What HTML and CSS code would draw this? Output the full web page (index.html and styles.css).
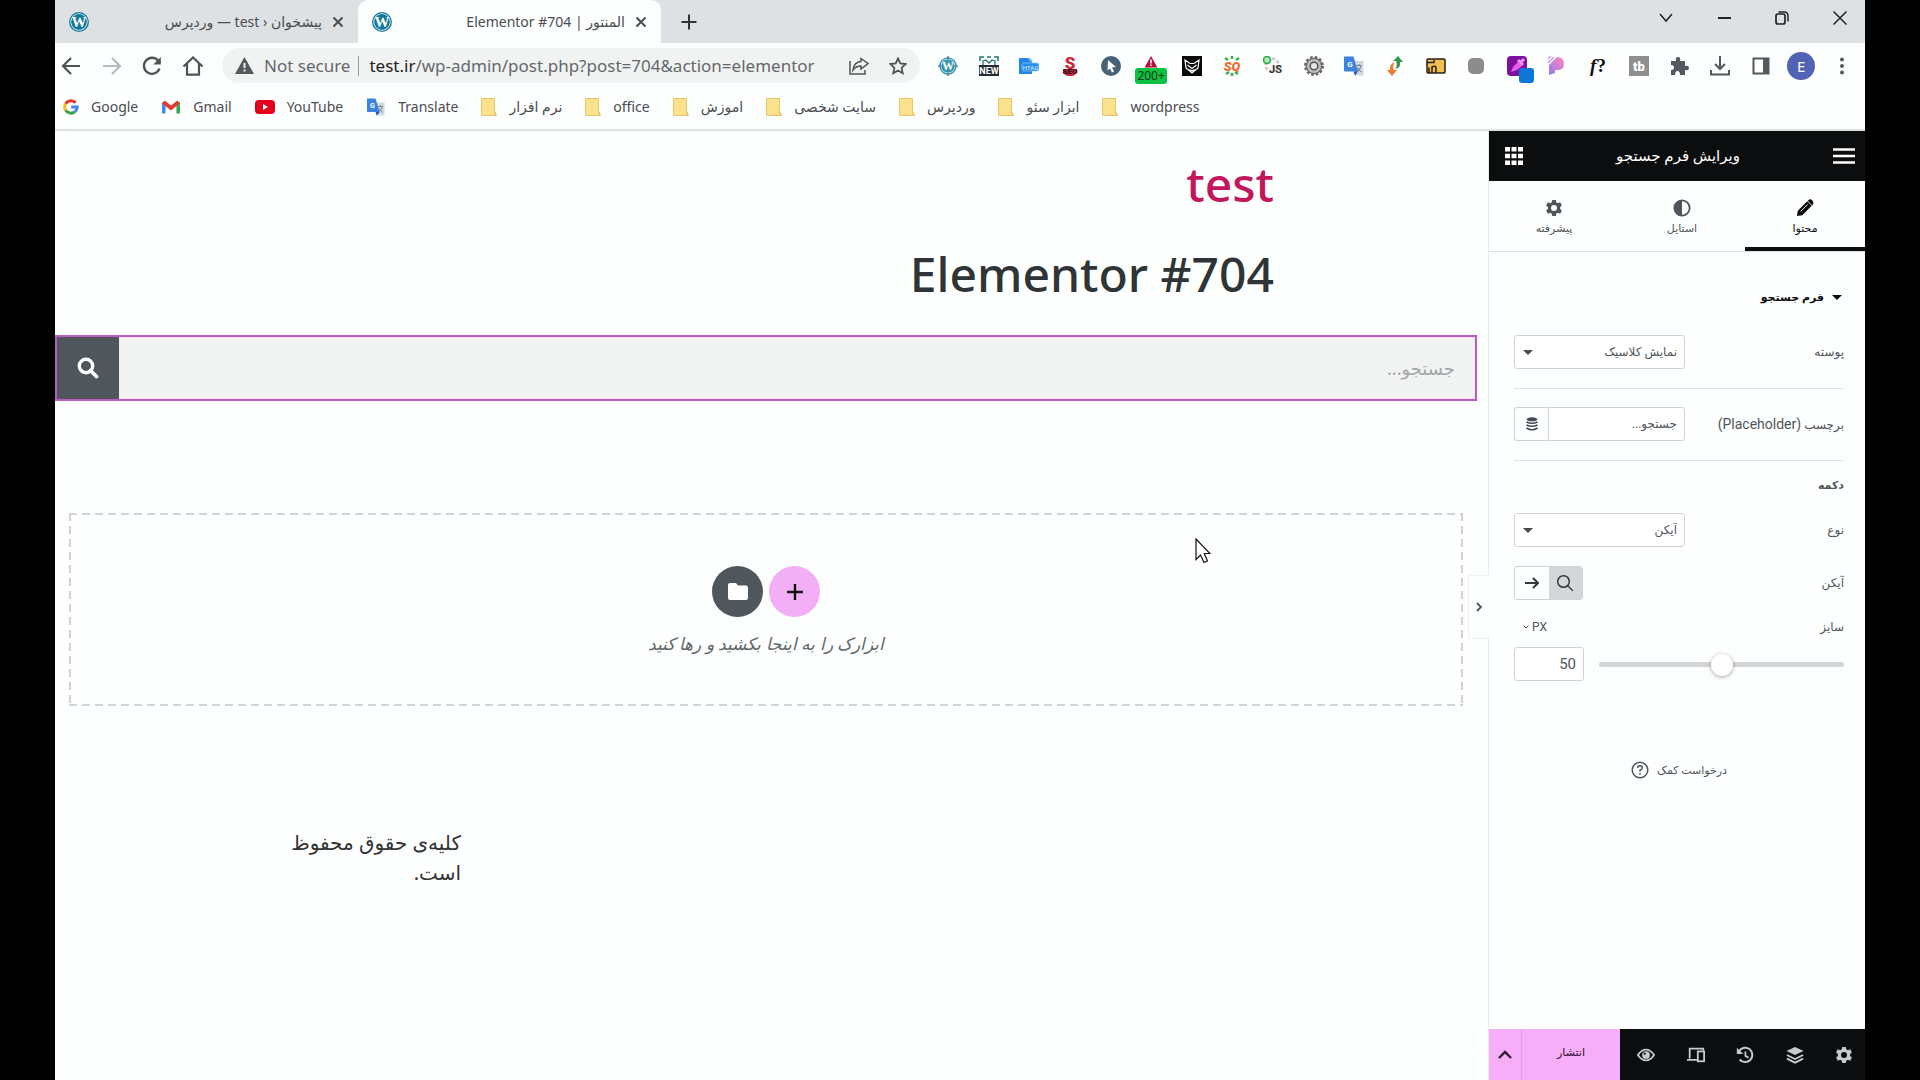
FILE: index.html
```html
<!DOCTYPE html>
<html lang="fa">
<head>
    <meta charset="UTF-8">
    <meta name="viewport" content="width=device-width, initial-scale=1.0">
    <title>المنتور | Elementor #704</title>
    <link rel="stylesheet" href="styles.css">
</head>
<body>
    <svg class="defs" aria-hidden="true">
        <symbol id="folder" viewBox="0 0 16 18">
            <path d="M.5.5h13v13l2 4H.5z" fill="#fbe28d" stroke="#e6c66a"/>
            <path d="M13.5 11v6.500h2z" fill="#e9c65d"/>
        </symbol>
        <symbol id="close" viewBox="0 0 12 12">
            <path d="M1.500 1.500l9 9m0-9l-9 9" stroke="currentColor" stroke-width="2" fill="none"/>
        </symbol>
        <symbol id="gear" viewBox="0 0 20 20">
            <path fill="currentColor" fill-rule="evenodd" d="M8 1h4l.5 2.600 1.800 1L16.800 3.700l2 3.500-2 1.700v2.200l2 1.700-2 3.500-2.500-.9-1.800 1L12 19H8l-.5-2.600-1.800-1-2.500.9-2-3.500 2-1.700V8.900l-2-1.700 2-3.500 2.500.9 1.800-1zM10 6.700a3.300 3.300 0 1 0 0 6.600 3.300 3.300 0 0 0 0-6.600z"/>
        </symbol>
    </svg>

    <header class="browser">
        <div class="tabs-bar">
            <div class="tab">
                <svg class="fav" viewBox="0 0 20 20"><circle cx="10" cy="10" r="9.300" fill="#fff" stroke="#12799a" stroke-width="1.300"/><circle cx="10" cy="10" r="7.900" fill="#12799a"/><text x="10" y="15" text-anchor="middle" font-family="Liberation Serif, serif" font-weight="bold" font-size="15" fill="#fff">W</text></svg>
                <span class="tab-title" dir="rtl">پیشخوان ‹ test — وردپرس</span>
                <button class="tab-close" aria-label="Close tab"><svg><use href="#close"/></svg></button>
            </div>
            <div class="tab active">
                <svg class="fav" viewBox="0 0 20 20"><circle cx="10" cy="10" r="9.300" fill="#fff" stroke="#12799a" stroke-width="1.300"/><circle cx="10" cy="10" r="7.900" fill="#12799a"/><text x="10" y="15" text-anchor="middle" font-family="Liberation Serif, serif" font-weight="bold" font-size="15" fill="#fff">W</text></svg>
                <span class="tab-title" dir="rtl">المنتور | Elementor #704</span>
                <button class="tab-close" aria-label="Close tab"><svg><use href="#close"/></svg></button>
            </div>
            <button class="new-tab" aria-label="New tab"><svg width="16" height="16" viewBox="0 0 16 16"><path d="M8 .5v15M.5 8h15" stroke="currentColor" stroke-width="2"/></svg></button>
            <div class="window-buttons">
                <button aria-label="Search tabs"><svg width="14" height="10" viewBox="0 0 14 10"><path d="M1 1l6 7 6-7" fill="none" stroke="currentColor" stroke-width="1.500"/></svg></button>
                <button aria-label="Minimize"><svg width="13" height="10" viewBox="0 0 13 10"><path d="M0 5h13" stroke="currentColor" stroke-width="2"/></svg></button>
                <button aria-label="Restore"><svg width="14" height="14" viewBox="0 0 14 14"><rect x="1" y="3" width="9" height="10" rx="2" fill="none" stroke="currentColor" stroke-width="1.700"/><path d="M3.500 1H9q4 0 4 4v5.500" fill="none" stroke="currentColor" stroke-width="1.500"/></svg></button>
                <button aria-label="Close"><svg width="14" height="14" viewBox="0 0 14 14"><path d="M.5.5l13 13m0-13l-13 13" stroke="currentColor" stroke-width="1.500"/></svg></button>
            </div>
        </div>

        <div class="toolbar">
            <div class="nav">
                <button aria-label="Back"><svg width="20" height="20" viewBox="0 0 20 20"><path d="M19 10H2m8-8l-8 8 8 8" fill="none" stroke="currentColor" stroke-width="2.200"/></svg></button>
                <button class="disabled" aria-label="Forward"><svg width="20" height="20" viewBox="0 0 20 20"><path d="M1 10h17m-8-8l8 8-8 8" fill="none" stroke="currentColor" stroke-width="2.200"/></svg></button>
                <button aria-label="Reload"><svg width="20" height="20" viewBox="0 0 20 20"><path d="M17.500 12.500A8 8 0 1 1 16 4.500L18 7" fill="none" stroke="currentColor" stroke-width="2.300"/><path d="M18.800 1v7.500h-7.500z" fill="currentColor"/></svg></button>
                <button aria-label="Home"><svg width="22" height="20" viewBox="0 0 22 20"><path d="M1.500 10.500L11 1.500l9.500 9M5 8v10.700h12V8" fill="none" stroke="currentColor" stroke-width="2.200"/></svg></button>
            </div>
            <div class="omnibox">
                <svg width="19" height="17" viewBox="0 0 19 17"><path d="M9.500 0L19 17H0z" fill="#55585c"/><path d="M9.500 6v5M9.500 12.500v2" stroke="#f1f3f4" stroke-width="2"/></svg>
                <span class="not-secure">Not secure</span>
                <span class="url"><b>test.ir</b>/wp-admin/post.php?post=704&amp;action=elementor</span>
                <button aria-label="Share"><svg width="20" height="18" viewBox="0 0 20 18"><path d="M1 4v13h15v-4" fill="none" stroke="currentColor" stroke-width="1.500"/><path d="M12 1.500l7 5-7 5.500V9q-5 0-8 4 1-8 8-8.500z" fill="none" stroke="currentColor" stroke-width="1.500"/></svg></button>
                <button aria-label="Bookmark"><svg width="18" height="18" viewBox="0 0 18 18"><path d="M9 1.500l2.300 5 5.300.6-4 3.700 1.100 5.400L9 13.500l-4.700 2.700 1.100-5.400-4-3.700 5.300-.6z" fill="none" stroke="currentColor" stroke-width="1.800"/></svg></button>
            </div>
            <div class="extensions">
                <svg viewBox="0 0 20 20"><circle cx="10" cy="10" r="8" fill="#fff" stroke="#4298b0" stroke-width="1.500"/><circle cx="10" cy="10" r="6.800" fill="#3794b0"/><text x="10" y="14.400" text-anchor="middle" font-family="Liberation Serif, serif" font-weight="bold" font-size="12" fill="#fff">W</text><path d="M10 0v3m0 14v3M0 10h3m14 0h3" stroke="#466a75" stroke-width="1.200"/></svg>
                <svg viewBox="0 0 20 20"><path d="M1 5V1h4M15 1h4v4M8 1h4" stroke="#28776f" stroke-width="1.600" fill="none"/><path d="M4 9V5l3-1 3 3 3-3 3 1v4" fill="none" stroke="#28776f" stroke-width="1.300"/><rect y="9" width="20" height="11" fill="#252b30"/><text x="10" y="18" text-anchor="middle" font-family="Roboto, sans-serif" font-weight="bold" font-size="9" fill="#fff">NEW</text></svg>
                <svg viewBox="0 0 20 20"><path d="M0 2h9l4 4v12H0z" fill="#2087e8"/><path d="M10 1l4 4h-4z" fill="#79bcfa"/><rect x="3" y="7" width="17" height="8" rx="2" fill="#278fed" stroke="#8cc6fb" stroke-width=".7"/><text x="11.500" y="13.500" text-anchor="middle" font-family="Roboto, sans-serif" font-size="6" fill="#e3f1ff">HTAG</text></svg>
                <svg viewBox="0 0 20 20"><text x="10" y="13" text-anchor="middle" font-family="Roboto, sans-serif" font-weight="900" font-size="17" fill="#cf2740">S</text><path d="M3 13h14v4l-4 3H7l-4-3z" fill="#cf2740"/><text x="10" y="18" text-anchor="middle" font-family="Roboto, sans-serif" font-weight="900" font-size="8" fill="#301018">SEO</text></svg>
                <svg viewBox="0 0 20 20"><circle cx="10" cy="10" r="10" fill="#476177"/><path d="M7 4l8 7-4 .5 2 4-2 1-2-4-2.500 2z" fill="#fff"/></svg>
                <span class="ext-badge"><svg viewBox="0 0 20 20"><path d="M10 0l6.500 11.500h-13z" fill="#b50f3c"/><path d="M10 3.500v4M10 8.500v1.500" stroke="#fff" stroke-width="1.500"/></svg><span class="badge">200+</span></span>
                <svg viewBox="0 0 20 20"><rect width="20" height="20" fill="#0a0a0a"/><path d="M3 4l5 3.500h4L17 4l-1 8-6 5-6-5zM5.500 9l4.500 3.500L14.500 9M7.500 13.500l2.500 1.500 2.500-1.500" fill="none" stroke="#fff" stroke-width="1.200"/></svg>
                <svg viewBox="0 0 20 20"><path d="M3 2l3 2M10 0v3M17 2l-3 2M4 18l3-2M10 20v-3M16 18l-3-2" stroke="#37b24a" stroke-width="2.500"/><text x="10" y="15" text-anchor="middle" font-family="Roboto, sans-serif" font-weight="900" font-style="italic" font-size="13" fill="#f06a29">SQ</text></svg>
                <svg viewBox="0 0 20 20"><circle cx="9" cy="9" r="6.500" fill="#f7f7f7" stroke="#c9c9c9" stroke-width="2.500" stroke-dasharray="3 2"/><circle cx="4" cy="4" r="3.500" fill="#a9edb8" stroke="#28a34a" stroke-width="1.500"/><text x="19" y="17" text-anchor="end" font-family="Roboto, sans-serif" font-weight="bold" font-size="11" fill="#333">JS</text></svg>
                <svg viewBox="0 0 20 20"><circle cx="10" cy="10" r="8.500" fill="#aaa" stroke="#666" stroke-width="3" stroke-dasharray="2.500 2"/><circle cx="10" cy="10" r="7.500" fill="#bdbdbd" stroke="#666"/><circle cx="10" cy="10" r="3.800" fill="#e5e5e5" stroke="#555" stroke-width="1.500"/></svg>
                <svg viewBox="0 0 20 20"><path d="M9 5h10.500v14.500H11z" fill="#d4d9df"/><path d="M12 9.500h6M15 8v1.500M17 10q-1 4-5 6M13 11.500q2 3 4.500 4.500" stroke="#7a8794" stroke-width="1.100" fill="none"/><path d="M0 .5h9.500L14 15.500H1q-1 0-1-1z" fill="#3c82de"/><path d="M9.500 15.500H14L11 19.800z" fill="#1f57b0"/><text x="6" y="11" text-anchor="middle" font-family="Roboto, sans-serif" font-weight="bold" font-size="8" fill="#fff">G</text></svg>
                <svg viewBox="0 0 20 20"><path d="M8 5l5-5 5 6h-3q1 6-5 7 3-3 1-8z" fill="#36944b"/><path d="M12 14l-5 6-5-6h3q-1-6 5-8-3 3-1 8z" fill="#ec7b38"/></svg>
                <svg viewBox="0 0 20 20"><rect x="1" y="3" width="18" height="14" rx="1" fill="#f3bf52" stroke="#282018" stroke-width="1.500"/><path d="M1 6.500h7V4M3 17v-5.500M6 17v-6q4-2 4 1v5" fill="none" stroke="#282018" stroke-width="1.500"/></svg>
                <svg viewBox="0 0 20 20"><rect x="2" y="2" width="16" height="16" rx="5" fill="#8c8c8c"/></svg>
                <span class="ext-badge"><svg viewBox="0 0 20 20"><rect width="20" height="20" rx="4" fill="#7b119e"/><path d="M4 16l2-5 5-5 4 4-5 4z" fill="#e55de7"/><path d="M11 4l5 5M13 7l4-4" stroke="#f292f0" stroke-width="3"/></svg><span class="badge-blue"></span></span>
                <svg viewBox="0 0 20 20"><defs><linearGradient id="pg" x1="1" y1="0" x2="0" y2="1"><stop offset="0" stop-color="#ff8ab9"/><stop offset="1" stop-color="#9676ef"/></linearGradient></defs><path d="M2 9l8-8q7 0 7 7t-9 6v3l-6 2z" fill="url(#pg)"/><path d="M1 3l3-3M1 7l6-6" stroke="#cc9cef" stroke-width="1.500"/></svg>
                <svg viewBox="0 0 20 20"><text x="10" y="16" text-anchor="middle" font-family="Liberation Serif, serif" font-weight="bold" font-size="19" fill="#111"><tspan font-style="italic">f</tspan>?</text></svg>
                <svg viewBox="0 0 20 20"><rect width="20" height="20" fill="#8f8f8f"/><text x="10" y="15" text-anchor="middle" font-family="Roboto, sans-serif" font-weight="900" font-size="13" fill="#fff">tb</text></svg>
                <svg viewBox="0 0 20 20"><path d="M2 5h5q-1-4 2-4t2 4h5v5q4-1 4 2t-4 2v5h-5q0-4-2.500-4T6 19H2v-5q3 0 3-2.500T2 9z" fill="#55585c"/></svg>
                <svg viewBox="0 0 20 20"><path d="M10 0v12M5 8l5 5 5-5M1 14v4.500h18V14" fill="none" stroke="#55585c" stroke-width="2"/></svg>
                <svg viewBox="0 0 20 20"><rect x="2.500" y="2.500" width="15" height="15" fill="#fff" stroke="#55585c" stroke-width="2"/><path d="M12 2h6v16h-6z" fill="#55585c"/></svg>
                <span class="avatar">E</span>
                <svg viewBox="0 0 20 20"><g fill="#55585c"><circle cx="10" cy="3.500" r="2"/><circle cx="10" cy="10" r="2"/><circle cx="10" cy="16.500" r="2"/></g></svg>
            </div>
        </div>

        <nav class="bookmarks">
            <a href="#"><svg viewBox="0 0 18 18"><g fill="none" stroke-width="3.400"><path d="M14.300 4.300A7 7 0 0 0 3 5.400" stroke="#e33c2e"/><path d="M3 5.400a7 7 0 0 0 0 7.200" stroke="#f5ba1b"/><path d="M3 12.600a7 7 0 0 0 10.500 1.700" stroke="#34a351"/><path d="M13.500 14.300Q16 12 16 9H9.200" stroke="#4385ee"/></g></svg>Google</a>
            <a href="#"><svg class="wide" viewBox="0 0 20 18"><path d="M2.800 15.500V4" stroke="#4285f4" stroke-width="3.500"/><path d="M17.200 15.500V4" stroke="#34a853" stroke-width="3.500"/><path d="M2.500 4L10 10l7.500-6" fill="none" stroke="#e33b30" stroke-width="3.800"/></svg>Gmail</a>
            <a href="#"><svg class="wide" viewBox="0 0 20 18"><rect y="2" width="20" height="14" rx="4" fill="#e5001e"/><path d="M8 6l5 3-5 3z" fill="#fff"/></svg>YouTube</a>
            <a href="#"><svg class="wide" viewBox="0 0 20 20"><path d="M9 5h10.500v14.500H11z" fill="#d4d9df"/><path d="M12 9.500h6M15 8v1.500M17 10q-1 4-5 6M13 11.500q2 3 4.500 4.500" stroke="#7a8794" stroke-width="1.100" fill="none"/><path d="M0 .5h9.500L14 15.500H1q-1 0-1-1z" fill="#3c82de"/><path d="M9.500 15.500H14L11 19.800z" fill="#1f57b0"/><text x="6" y="11" text-anchor="middle" font-family="Roboto, sans-serif" font-weight="bold" font-size="8" fill="#fff">G</text></svg>Translate</a>
            <a href="#"><svg><use href="#folder"/></svg>نرم افزار</a>
            <a href="#"><svg><use href="#folder"/></svg>office</a>
            <a href="#"><svg><use href="#folder"/></svg>اموزش</a>
            <a href="#"><svg><use href="#folder"/></svg>سایت شخصی</a>
            <a href="#"><svg><use href="#folder"/></svg>وردپرس</a>
            <a href="#"><svg><use href="#folder"/></svg>ابزار سئو</a>
            <a href="#"><svg><use href="#folder"/></svg>wordpress</a>
        </nav>
    </header>

    <div class="editor" dir="rtl">
        <aside class="panel">
            <div class="panel-header">
                <button aria-label="منو"><svg width="22" height="16" viewBox="0 0 22 16"><path d="M0 1.500h22M0 8h22M0 14.500h22" stroke="currentColor" stroke-width="2.500"/></svg></button>
                <h2>ویرایش فرم جستجو</h2>
                <button aria-label="ابزارک‌ها"><svg width="18" height="18" viewBox="0 0 18 18"><path d="M0 0h5v4.500H0zM6.500 0h5v4.500h-5zM13 0h5v4.500h-5zM0 6.700h5v4.500H0zM6.500 6.700h5v4.500h-5zM13 6.700h5v4.500h-5zM0 13.500h5V18H0zM6.500 13.500h5V18h-5zM13 13.500h5V18h-5z" fill="currentColor"/></svg></button>
            </div>
            <div class="panel-tabs">
                <button class="active"><svg viewBox="0 0 20 20"><path d="M2 13L12.500 2.500l5 5L7 18l-6 1z" fill="currentColor"/><path d="M14 1q2-1.500 4 .5t.8 4.500l-1 1L13 2z" fill="currentColor"/><path d="M5 14L13 6" stroke="#fff"/></svg>محتوا</button>
                <button><svg viewBox="0 0 20 20"><circle cx="10" cy="10" r="8.500" fill="#fff" stroke="currentColor" stroke-width="2"/><path d="M10 1.500a8.500 8.500 0 0 0 0 17z" fill="currentColor"/></svg>استایل</button>
                <button><svg><use href="#gear"/></svg>پیشرفته</button>
            </div>
            <div class="controls">
                <h3><span class="caret"></span>فرم جستجو</h3>
                <div class="row">
                    <label for="skin">پوسته</label>
                    <div class="select"><select id="skin"><option>نمایش کلاسیک</option></select></div>
                </div>
                <hr>
                <div class="row">
                    <label for="placeholder">برچسب <span class="latin">(Placeholder)</span></label>
                    <div class="dynamic">
                        <input type="text" id="placeholder" value="جستجو...">
                        <button aria-label="برچسب‌های پویا"><svg width="12" height="14" viewBox="0 0 12 14"><ellipse cx="6" cy="2.300" rx="5.500" ry="2" fill="#444a50"/><path d="M.5 5q5.500 2.500 11 0M.5 8q5.500 2.500 11 0M.5 11q5.500 3.500 11 0" fill="none" stroke="#444a50" stroke-width="1.700"/></svg></button>
                    </div>
                </div>
                <hr>
                <h4>دکمه</h4>
                <div class="row">
                    <label for="type">نوع</label>
                    <div class="select"><select id="type"><option>آیکن</option></select></div>
                </div>
                <div class="row">
                    <span>آیکن</span>
                    <div class="choices">
                        <button class="on" aria-label="جستجو"><svg width="18" height="18" viewBox="0 0 18 18"><circle cx="7.500" cy="7.500" r="5.800" fill="none" stroke="currentColor" stroke-width="1.500"/><path d="M11.800 11.800l5 5" stroke="currentColor" stroke-width="1.300"/></svg></button>
                        <button aria-label="پیکان"><svg width="14" height="12" viewBox="0 0 14 12"><path d="M0 6h12.500M8 1l5 5-5 5" fill="none" stroke="currentColor" stroke-width="2"/></svg></button>
                    </div>
                </div>
                <div class="row size-row">
                    <label for="size">سایز</label>
                    <button class="unit">PX<svg width="6" height="4" viewBox="0 0 6 4"><path d="M.5.5L3 3 5.500.5" fill="none" stroke="currentColor"/></svg></button>
                </div>
                <div class="slider-row">
                    <input type="range" id="size" min="0" max="100" value="50">
                    <input type="text" class="number" aria-label="سایز" value="50" dir="ltr">
                </div>
                <a class="help" href="#">درخواست کمک<svg width="18" height="18" viewBox="0 0 18 18"><circle cx="9" cy="9" r="7.800" fill="none" stroke="currentColor" stroke-width="1.500"/><path d="M6.700 7q0-2.300 2.300-2.300T11.300 7Q11.300 8.200 9 9.200v1.300M9 12v1.700" fill="none" stroke="currentColor" stroke-width="1.500"/></svg></a>
            </div>
            <footer class="panel-footer">
                <div class="tools">
                    <button aria-label="تنظیمات"><svg viewBox="0 0 20 20"><use href="#gear"/></svg></button>
                    <button aria-label="لایه‌ها"><svg viewBox="0 0 20 20"><path d="M10 1l9.500 4.500L10 10 .5 5.500z" fill="currentColor"/><path d="M1 10l9 4.500 9-4.500M1 14l9 4.500 9-4.500" fill="none" stroke="currentColor" stroke-width="2"/></svg></button>
                    <button aria-label="تاریخچه"><svg viewBox="0 0 20 20"><path d="M3.500 5.500A8 8 0 1 1 4 15" fill="none" stroke="currentColor" stroke-width="2.200"/><path d="M1 2v7h7z" fill="currentColor"/><path d="M10.500 6v5l3.500 2" fill="none" stroke="currentColor" stroke-width="2"/></svg></button>
                    <button aria-label="واکنش‌گرا"><svg viewBox="0 0 20 20"><path d="M18 5V3H3v11M0 15.500h11" fill="none" stroke="currentColor" stroke-width="2"/><rect x="12" y="6" width="7" height="11" fill="none" stroke="currentColor" stroke-width="2"/></svg></button>
                    <button aria-label="پیش‌نمایش"><svg viewBox="0 0 20 20"><path d="M1 10q4-6 9-6t9 6q-4 6-9 6t-9-6z" fill="none" stroke="currentColor" stroke-width="2"/><circle cx="10" cy="10" r="4.300" fill="currentColor"/><circle cx="8.500" cy="8.500" r="1.200" fill="#0c0d0e"/></svg></button>
                </div>
                <button class="publish">انتشار</button>
                <button class="publish-more" aria-label="گزینه‌های ذخیره"><svg width="14" height="9" viewBox="0 0 14 9"><path d="M1 8l6-6 6 6" fill="none" stroke="currentColor" stroke-width="2.300"/></svg></button>
            </footer>
            <button class="collapse" aria-label="بستن پنل"><svg width="6" height="10" viewBox="0 0 6 10"><path d="M1 1l4 4-4 4" fill="none" stroke="currentColor" stroke-width="1.800"/></svg></button>
        </aside>

        <main class="preview">
            <div class="container">
                <a class="site-title" href="#">test</a>
                <h1>Elementor #704</h1>
            </div>
            <form class="search">
                <input type="search" placeholder="جستجو..." aria-label="جستجو">
                <button type="button" aria-label="جستجو"><svg width="22" height="22" viewBox="0 0 22 22"><circle cx="9" cy="9" r="6.700" fill="none" stroke="currentColor" stroke-width="3.400"/><path d="M13.500 13.500l6 6" stroke="currentColor" stroke-width="3.800" stroke-linecap="round"/></svg></button>
            </form>
            <section class="add-section">
                <div class="add-buttons">
                    <button class="add" aria-label="افزودن"><svg width="16" height="16" viewBox="0 0 16 16"><path d="M8 0v16M0 8h16" stroke="currentColor" stroke-width="2.400"/></svg></button>
                    <button class="templates" aria-label="قالب‌ها"><svg width="20" height="17" viewBox="0 0 20 17"><path d="M2 0h6l2 2.500h8q2 0 2 2V15q0 2-2 2H2q-2 0-2-2V2q0-2 2-2z" fill="currentColor"/></svg></button>
                </div>
                <p>ابزارک را به اینجا بکشید و رها کنید</p>
            </section>
            <footer class="container site-footer">
                <p>کلیه‌ی حقوق محفوظ است.</p>
            </footer>
        </main>
    </div>

    <svg class="cursor" width="16" height="26" viewBox="0 0 16 26"><path d="M1 1v20.500l4.500-4.500 3.500 7.500 3.500-1.500-3.300-7.500H15z" fill="#fff" stroke="#111" stroke-width="1.200"/></svg>
</body>
</html>
```
FILE: styles.css
```css
* {
    box-sizing: border-box;
}

body {
    margin: 0;
    padding: 0 55px;
    height: 100vh;
    display: flex;
    flex-direction: column;
    overflow: hidden;
    background-color: #000;
    color: #4a4d50;
    font-family: "Noto Sans", "DejaVu Sans", sans-serif;
    font-size: 15px;
}

button {
    display: flex;
    align-items: center;
    justify-content: center;
    padding: 0;
    border: none;
    background: none;
    color: inherit;
    font: inherit;
    cursor: pointer;
}

a {
    color: inherit;
    text-decoration: none;
}

svg {
    flex: none;
}

.defs {
    position: absolute;
    width: 0;
    height: 0;
}

/* browser chrome */
.browser {
    background-color: #fdfefe;
    border-bottom: 2px solid #e0e2e2;
}

.tabs-bar {
    display: flex;
    height: 43px;
    background-color: #dde1e4;
}

.tab {
    display: flex;
    align-items: center;
    width: 303px;
    padding: 0 14px;
}

.tab.active {
    background-color: #fdfefe;
    border-radius: 10px 10px 0 0;
}

.fav {
    width: 20px;
    height: 20px;
}

.tab-title {
    flex: 1;
    font-size: 14px;
    white-space: nowrap;
}

.tab-close {
    margin-left: 10px;
}

.tab-close svg {
    width: 12px;
    height: 12px;
}

.new-tab {
    width: 56px;
    color: #333;
}

.window-buttons {
    display: flex;
    margin-left: auto;
    height: 36px;
    color: #222;
}

.window-buttons button {
    width: 58px;
}

.window-buttons button:last-child {
    width: 54px;
    padding-left: 4px;
}

.toolbar {
    display: flex;
    align-items: center;
    height: 45px;
}

.nav {
    display: flex;
    width: 167px;
    padding-left: 4px;
}

.nav button {
    width: 41px;
    height: 28px;
    padding-right: 17px;
}

.nav,
.omnibox button {
    color: #505356;
}

.nav .disabled {
    color: #b8babc;
}

.omnibox {
    display: flex;
    align-items: center;
    width: 698px;
    height: 35px;
    padding: 0 13px;
    border-radius: 18px;
    background-color: #f1f3f3;
    font-size: 17px;
    line-height: 20px;
    color: #65686b;
}

.not-secure {
    margin-left: 10px;
    padding-right: 8px;
    border-right: 1px solid #9a9d9f;
}

.url {
    flex: 1;
    margin-left: 10px;
    white-space: nowrap;
}

.url b {
    font-weight: 400;
    color: #222;
}

.omnibox button {
    margin-left: 20px;
}

.extensions {
    flex: 1;
    display: flex;
    align-items: center;
    justify-content: space-between;
    padding: 0 13px 0 18px;
}

.extensions svg {
    display: block;
    width: 20px;
    height: 20px;
}

.ext-badge {
    position: relative;
}

.badge {
    position: absolute;
    top: 12px;
    left: -6px;
    width: 32px;
    height: 16px;
    border-radius: 3px;
    background-color: #0dc143;
    color: #0a3a16;
    font-size: 12px;
    line-height: 16px;
    text-align: center;
}

.badge-blue {
    position: absolute;
    top: 12px;
    left: 12px;
    width: 15px;
    height: 15px;
    border-radius: 3px;
    background-color: #0b78d8;
}

.avatar {
    width: 28px;
    height: 28px;
    margin: 0 -4px;
    border-radius: 50%;
    background-color: #5263b5;
    color: #fff;
    font-size: 15px;
    line-height: 28px;
    text-align: center;
}

.bookmarks {
    display: flex;
    align-items: center;
    gap: 23px;
    height: 41px;
    padding: 0 8px 4px;
    font-size: 14px;
    white-space: nowrap;
}

.bookmarks a {
    display: flex;
    align-items: center;
    gap: 12px;
}

.bookmarks svg {
    width: 16px;
    height: 18px;
}

.bookmarks .wide {
    width: 20px;
}

/* editor */
.editor {
    flex: 1;
    min-height: 0;
    display: flex;
    background-color: #fdfefe;
}

.panel {
    position: relative;
    width: 377px;
    flex: none;
    display: flex;
    flex-direction: column;
    border-left: 1px solid #e9ebeb;
    font-family: Roboto, "DejaVu Sans", sans-serif;
    font-size: 12px;
    color: #50555a;
}

.panel-header {
    display: flex;
    align-items: center;
    justify-content: space-between;
    height: 50px;
    padding: 0 10px 0 16px;
    background-color: #0c0d0e;
    color: #fff;
}

.panel-header h2 {
    margin: 0;
    font-size: 15px;
    font-weight: 400;
}

.panel-tabs {
    display: flex;
    height: 71px;
    border-bottom: 1px solid #dfe2e4;
}

.panel-tabs button {
    flex: 126;
    flex-direction: column;
    gap: 5px;
    padding-top: 5px;
    border-bottom: 4px solid transparent;
    font-size: 11px;
}

.panel-tabs .active {
    flex: 120;
    border-color: #0c0d0e;
    color: #0c0d0e;
}

.panel-tabs button:last-child {
    flex: 130;
}

.panel-tabs svg {
    width: 18px;
    height: 18px;
}

.controls {
    flex: 1;
    padding: 35px 21px 0 25px;
}

.controls h3 {
    display: flex;
    align-items: center;
    gap: 8px;
    margin: 0 0 27px;
    font-size: 11px;
    line-height: 21px;
    color: #0c0d0e;
}

.caret {
    margin-right: 2px;
    border: 5px solid transparent;
    border-top-color: currentColor;
    border-bottom: none;
}

.row {
    display: flex;
    align-items: center;
    justify-content: space-between;
    height: 34px;
    margin-bottom: 19px;
}

.row label {
    white-space: nowrap;
}

.latin {
    font-size: 14px;
}

.controls hr {
    height: 1px;
    margin: 0 0 18px;
    border: none;
    background-color: #dfe2e4;
}

.controls h4 {
    margin: 0 0 20px;
    font-size: 11px;
    line-height: 14px;
}

.select,
.dynamic {
    position: relative;
    width: 171px;
    height: 34px;
}

.select select,
.dynamic input,
.number {
    width: 100%;
    height: 34px;
    padding: 0 7px;
    border: 1px solid #d0d3d6;
    border-radius: 3px;
    background-color: #fff;
    color: #50555a;
    font: inherit;
    appearance: none;
}

/* drop-down arrow */
.select::after {
    content: "";
    position: absolute;
    top: 15px;
    left: 9px;
    border: 5px solid transparent;
    border-top-color: #444a50;
    border-bottom: none;
}

.dynamic {
    display: flex;
}

.dynamic input {
    flex: 1;
    min-width: 0;
    border-radius: 0 3px 3px 0;
}

.dynamic button {
    width: 34px;
    border: 1px solid #d0d3d6;
    border-right: none;
    border-radius: 3px 0 0 3px;
}

.choices {
    display: flex;
    width: 69px;
    height: 34px;
    border: 1px solid #d0d3d6;
    border-radius: 3px;
    overflow: hidden;
    color: #33383c;
}

.choices button {
    flex: 1;
}

.choices .on {
    background-color: #d3d7da;
}

.size-row {
    height: 16px;
    margin-bottom: 12px;
}

.unit {
    flex-direction: row;
    gap: 3px;
    margin-left: 9px;
    font-size: 12px;
}

.slider-row {
    display: flex;
    align-items: center;
    gap: 15px;
}

.slider-row input[type="range"] {
    flex: 1;
    min-width: 0;
    height: 22px;
    margin: 0;
    background: none;
    appearance: none;
}

input[type="range"]::-webkit-slider-runnable-track {
    height: 5px;
    border-radius: 3px;
    background-color: #d3d5d8;
}

input[type="range"]::-webkit-slider-thumb {
    width: 22px;
    height: 22px;
    margin-top: -8px;
    border-radius: 50%;
    background-color: #fff;
    box-shadow: 0 1px 4px rgba(0, 0, 0, 0.35);
    appearance: none;
}

.slider-row .number {
    width: 70px;
    text-align: right;
    font-size: 15px;
}

.help {
    display: flex;
    align-items: center;
    justify-content: center;
    gap: 8px;
    margin-top: 80px;
    font-size: 11px;
}

.panel-footer {
    display: flex;
    height: 51px;
}

.tools {
    flex: 1;
    display: flex;
    align-items: center;
    justify-content: space-between;
    padding: 0 12px 0 17px;
    background-color: #0c0d0e;
    color: #c4cbd1;
}

.tools svg {
    width: 18px;
    height: 18px;
}

.publish,
.publish-more {
    background-color: #f6aef8;
    color: #2b1030;
}

.publish {
    width: 98px;
    padding-bottom: 4px;
    font-size: 11px;
}

.publish-more {
    width: 33px;
    border-right: 1px solid #e79de9;
}

.collapse {
    position: absolute;
    top: 444px;
    left: -21px;
    width: 21px;
    height: 64px;
    border: 1px solid #f1f2f2;
    border-right: none;
    background-color: #fdfefe;
}

/* preview */
.preview {
    flex: 1;
    min-width: 0;
    padding-right: 11px;
    color: #333;
}

.container {
    width: 1016px;
    max-width: 100%;
    margin: 0 auto;
}

.site-title,
h1 {
    display: block;
    margin: 0;
    font-size: 48px;
    line-height: 58px;
    font-weight: 500;
}

.site-title {
    padding-top: 24px;
    color: #c2185b;
}

h1 {
    padding: 32px 0;
    color: #2f3436;
}

.search {
    display: flex;
    height: 66px;
    border: 2px solid #b95cb9;
    background-color: #f1f3f3;
}

.search input {
    flex: 1;
    min-width: 0;
    padding: 0 20px;
    border: none;
    background: none;
    box-shadow: inset 0 0 0 1px #f5e3f7;
    font: inherit;
    font-size: 18px;
    outline: none;
}

.search input::placeholder {
    color: #a3a6a8;
}

.search button {
    width: 62px;
    background-color: #50575c;
    color: #fff;
}

.add-section {
    height: 193px;
    margin: 112px 14px 0;
    padding-top: 53px;
    background:
        repeating-linear-gradient(90deg, #d2d5d4 0 8px, transparent 8px 13px) top / 100% 2px no-repeat,
        repeating-linear-gradient(90deg, #d2d5d4 0 8px, transparent 8px 13px) bottom / 100% 2px no-repeat,
        repeating-linear-gradient(#d6cfda 0 8px, transparent 8px 13px) left / 2px 100% no-repeat,
        repeating-linear-gradient(#d6cfda 0 8px, transparent 8px 13px) right / 2px 100% no-repeat;
    text-align: center;
}

.add-buttons {
    display: flex;
    justify-content: center;
    gap: 6px;
}

.add-buttons button {
    width: 51px;
    height: 51px;
    border-radius: 50%;
}

.add-buttons .add {
    background-color: #f3aff5;
    color: #111;
}

.add-buttons .templates {
    background-color: #50575c;
    color: #fff;
}

.add-section p {
    margin: 15px 0 0;
    font-size: 17px;
    font-style: italic;
    line-height: 24px;
    color: #65686b;
}

.site-footer {
    display: flex;
    justify-content: flex-end;
    margin-top: 122px;
}

.site-footer p {
    width: 203px;
    margin: 0;
    font-size: 20px;
    line-height: 30px;
}

.cursor {
    position: absolute;
    top: 538px;
    left: 1195px;
}
```
